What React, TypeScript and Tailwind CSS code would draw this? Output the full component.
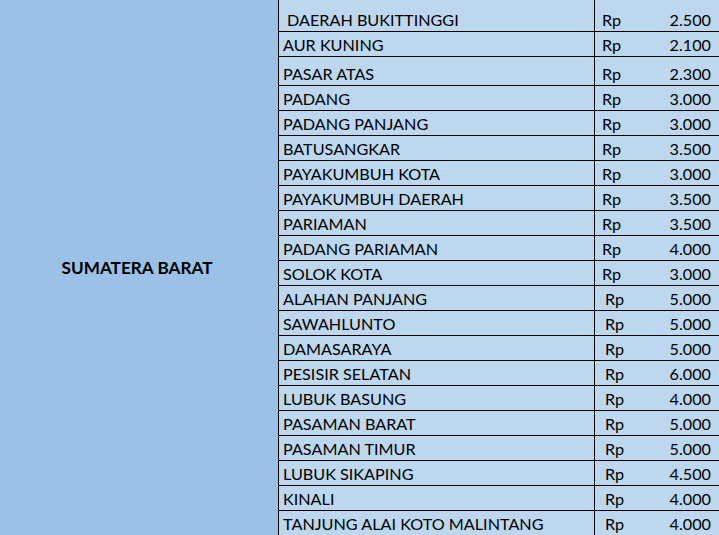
import React from "react";

const rows: { name: string; val: string; h: string; shift?: boolean; indent?: boolean }[] = [
  { name: "DAERAH BUKITTINGGI", val: "2.500", h: "h-[32px]", indent: true },
  { name: "AUR KUNING", val: "2.100", h: "h-[25px]" },
  { name: "PASAR ATAS", val: "2.300", h: "h-[29px]" },
  { name: "PADANG", val: "3.000", h: "h-[25px]" },
  { name: "PADANG PANJANG", val: "3.000", h: "h-[25px]" },
  { name: "BATUSANGKAR", val: "3.500", h: "h-[25px]" },
  { name: "PAYAKUMBUH KOTA", val: "3.000", h: "h-[25px]" },
  { name: "PAYAKUMBUH DAERAH", val: "3.500", h: "h-[25px]" },
  { name: "PARIAMAN", val: "3.500", h: "h-[25px]" },
  { name: "PADANG PARIAMAN", val: "4.000", h: "h-[25px]" },
  { name: "SOLOK KOTA", val: "3.000", h: "h-[25px]" },
  { name: "ALAHAN PANJANG", val: "5.000", h: "h-[25px]", shift: true },
  { name: "SAWAHLUNTO", val: "5.000", h: "h-[25px]", shift: true },
  { name: "DAMASARAYA", val: "5.000", h: "h-[25px]", shift: true },
  { name: "PESISIR SELATAN", val: "6.000", h: "h-[25px]", shift: true },
  { name: "LUBUK BASUNG", val: "4.000", h: "h-[25px]", shift: true },
  { name: "PASAMAN BARAT", val: "5.000", h: "h-[25px]", shift: true },
  { name: "PASAMAN TIMUR", val: "5.000", h: "h-[25px]", shift: true },
  { name: "LUBUK SIKAPING", val: "4.500", h: "h-[25px]", shift: true },
  { name: "KINALI", val: "4.000", h: "h-[25px]", shift: true },
  { name: "TANJUNG ALAI KOTO MALINTANG", val: "4.000", h: "h-[25px]", shift: true },
];

export default function App() {
  return (
    <div
      className="flex w-[719px] h-[535px] overflow-hidden bg-[#BDD7EE] text-black"
      style={{ fontFamily: "Lato, 'Open Sans', sans-serif" }}
    >
      <div className="w-[278px] shrink-0 bg-[#9BC2E6] flex items-center justify-center pr-[4px]">
        <span className="font-bold text-[17.2px]">SUMATERA BARAT</span>
      </div>
      <div className="flex-1 flex flex-col border-l border-black">
        {rows.map((r, i) => (
          <div
            key={i}
            className={`${r.h} shrink-0 flex border-b border-black text-[16.2px] leading-[18px]`}
          >
            <div
              className={`w-[316px] shrink-0 flex items-end pb-[2px] border-r border-black whitespace-nowrap overflow-hidden ${
                r.indent ? "pl-[8px]" : "pl-[4px]"
              }`}
            >
              {r.name}
            </div>
            <div
              className={`flex-1 flex items-end justify-between pb-[2px] pr-[8px] ${
                r.shift ? "pl-[10px]" : "pl-[7px]"
              }`}
            >
              <span>Rp</span>
              <span>{r.val}</span>
            </div>
          </div>
        ))}
      </div>
    </div>
  );
}
